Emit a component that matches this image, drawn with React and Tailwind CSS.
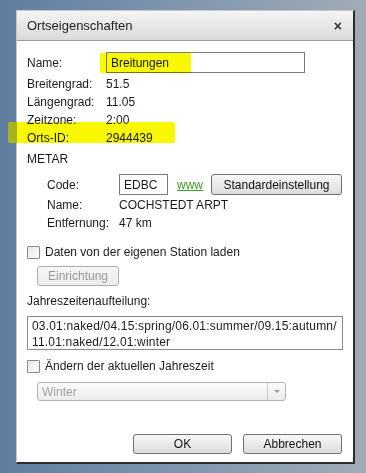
export default function App() {
  const font = { fontFamily: '"Liberation Sans", Arial, sans-serif' };
  const btn =
    "flex items-center justify-center border border-[#707070] rounded-[3px] bg-gradient-to-b from-[#f8f8f8] to-[#dcdcdc] text-[12px] text-[#111]";
  const Check = ({ label }) => (
    <div className="flex items-center h-[18px]">
      <div className="w-[13px] h-[13px] border border-[#8a8a8a] rounded-[1px] bg-gradient-to-br from-[#e8e8e8] to-[#fdfdfd]" />
      <span className="ml-[5px]">{label}</span>
    </div>
  );
  return (
    <div
      className="relative w-[366px] h-[473px] overflow-hidden bg-gradient-to-r from-[#5f7ea0] via-[#7f96ae] to-[#a1abb6] pt-[10px] pl-[16px]"
      style={font}
    >
      <div className="w-[339px] h-[454px] bg-white border-l border-t border-[#c6c6c6] border-r-2 border-b-2 border-r-[#2b2b2b] border-b-[#2b2b2b] flex flex-col text-[12px] text-[#1a1a1a]">
        <div className="h-[30px] shrink-0 flex items-center justify-between pl-[10px] pr-[11px] bg-gradient-to-b from-[#f4f4f4] to-[#dadada] border-b border-[#9c9c9c]">
          <span className="text-[13px] text-[#222]">Ortseigenschaften</span>
          <span className="text-[14px] font-bold text-[#333] leading-none">×</span>
        </div>
        <div className="pl-[10px] pr-[10px] flex flex-col">
          <div className="mt-[11px] flex items-center h-[21px]">
            <span className="w-[79px]">Name:</span>
            <div className="w-[199px] h-[21px] border border-[#7a7a7a] flex items-center pl-[4px] text-[12px]">
              Breitungen
            </div>
          </div>
          <div className="mt-[2px] flex items-center h-[18px]">
            <span className="w-[79px]">Breitengrad:</span>
            <span>51.5</span>
          </div>
          <div className="flex items-center h-[18px]">
            <span className="w-[79px]">Längengrad:</span>
            <span>11.05</span>
          </div>
          <div className="flex items-center h-[18px]">
            <span className="w-[79px]">Zeitzone:</span>
            <span>2:00</span>
          </div>
          <div className="flex items-center h-[18px]">
            <span className="w-[79px]">Orts-ID:</span>
            <span>2944439</span>
          </div>
          <div className="mt-[3px] flex items-center h-[18px]">METAR</div>
          <div className="mt-[6px] pl-[20px] flex items-center h-[21px]">
            <span className="w-[72px]">Code:</span>
            <div className="w-[49px] h-[21px] border border-[#7a7a7a] flex items-center pl-[4px] text-[12px]">
              EDBC
            </div>
            <span className="ml-[9px] text-[#3a9a2a] underline decoration-[#3a9a2a]">www</span>
            <div className={btn + " ml-[8px] w-[131px] h-[21px]"}>Standardeinstellung</div>
          </div>
          <div className="mt-[1px] pl-[20px] flex items-center h-[18px]">
            <span className="w-[72px]">Name:</span>
            <span>COCHSTEDT ARPT</span>
          </div>
          <div className="pl-[20px] flex items-center h-[18px]">
            <span className="w-[72px]">Entfernung:</span>
            <span>47 km</span>
          </div>
          <div className="mt-[11px]">
            <Check label="Daten von der eigenen Station laden" />
          </div>
          <div className="mt-[5px] ml-[10px] w-[82px] h-[20px] flex items-center justify-center border border-[#adadad] rounded-[3px] bg-gradient-to-b from-[#f6f6f6] to-[#ececec] text-[#999999]">
            Einrichtung
          </div>
          <div className="mt-[6px] flex items-center h-[18px]">Jahreszeitenaufteilung:</div>
          <div className="mt-[6px] w-[316px] h-[34px] border border-[#8a8a8a] pl-[4px] pt-[1px] leading-[16px] tracking-[0.18px]">
            <div>03.01:naked/04.15:spring/06.01:summer/09.15:autumn/</div>
            <div>11.01:naked/12.01:winter</div>
          </div>
          <div className="mt-[7px]">
            <Check label="Ändern der aktuellen Jahreszeit" />
          </div>
          <div className="mt-[7px] ml-[10px] w-[249px] h-[19px] flex border border-[#b4b4b4] rounded-[3px] bg-gradient-to-b from-[#fbfbfb] to-[#ececec]">
            <div className="flex-1 flex items-center pl-[4px] text-[#a3a3a3]">Winter</div>
            <div className="w-[18px] border-l border-[#c8c8c8] flex items-center justify-center">
              <div className="w-0 h-0 border-l-[3px] border-r-[3px] border-t-[3px] border-l-transparent border-r-transparent border-t-[#9a9a9a]" />
            </div>
          </div>
          <div className="mt-[33px] flex justify-end gap-[11px] pr-[1px]">
            <div className={btn + " w-[99px] h-[20px]"}>OK</div>
            <div className={btn + " w-[99px] h-[20px]"}>Abbrechen</div>
          </div>
        </div>
      </div>
      <div className="absolute left-[100px] top-[53px] w-[91px] h-[20px] bg-[#f8f800] mix-blend-multiply rounded-[2px] blur-[0.5px]" />
      <div className="absolute left-[8px] top-[122px] w-[9px] h-[21px] bg-[#a9b020] rounded-l-[2px] blur-[0.5px]" />
      <div className="absolute left-[17px] top-[122px] w-[158px] h-[21px] bg-[#f8f800] mix-blend-multiply rounded-r-[2px] blur-[0.5px]" />
    </div>
  );
}
